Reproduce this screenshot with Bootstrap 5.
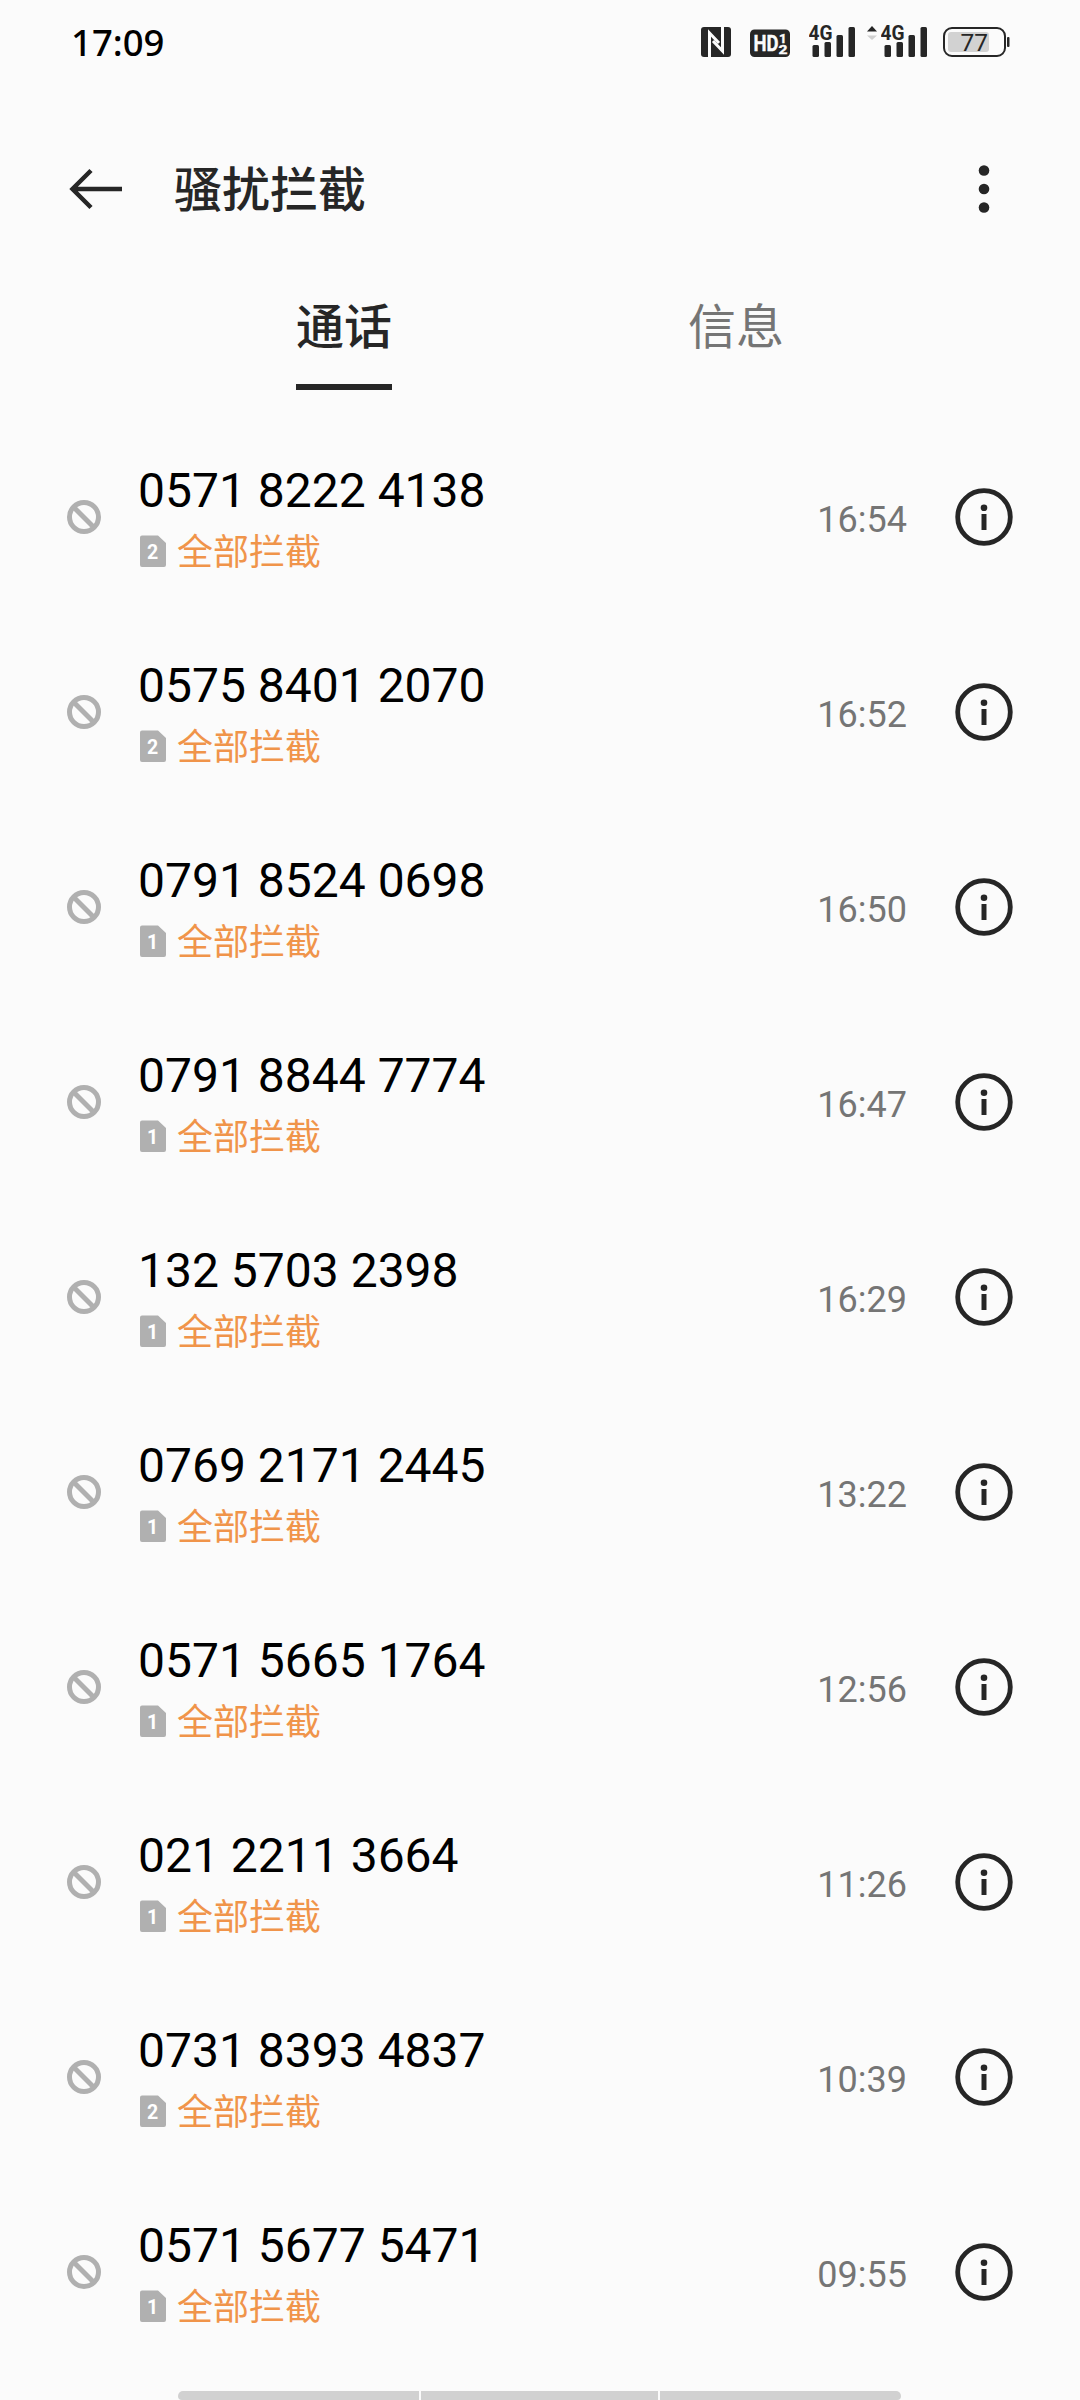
<!DOCTYPE html>
<html lang="zh-CN">
<head>
<meta charset="utf-8">
<meta name="viewport" content="width=device-width, initial-scale=1">
<title>骚扰拦截</title>
<link href="https://cdn.jsdelivr.net/npm/bootstrap@5.3.0/dist/css/bootstrap.min.css" rel="stylesheet">
<style>
  body { background: #fbfbfb; color: #262626; font-family: Roboto, "Noto Sans CJK SC", sans-serif; }
  svg { display: block; flex: none; }
  .screen { width: 1080px; height: 2400px; overflow: hidden; }
  .status { height: 84px; padding: 0 70px 0 71px; }
  .clock { font: 500 36.500px/40px "Noto Sans", sans-serif; color: #000; }
  .appbar { height: 210px; padding: 0 90px 0 69px; }
  .appbar h1 { font-size: 48px; line-height: 60px; font-weight: 500; margin-left: 51px; padding-top: 3px; }
  .tabs { height: 126px; padding-left: 296px; gap: 296px; }
  .tabs .nav-link { padding: 1px 0 0; font-size: 48px; line-height: 66px; color: #757575; border-radius: 0; height: 96px; border-bottom: 6px solid transparent; }
  .tabs .nav-link.active { color: #262626; font-weight: 500; border-color: #262626; }
  .call { height: 195px; padding: 0 67px 2px 67px; }
  .call-body { margin-left: 37px; padding-top: 4px; }
  .phone { font-size: 48px; line-height: 56px; color: #000; }
  .tag { font-size: 36px; line-height: 44px; color: #f0944a; gap: 11px; margin: 8px 0 0 2px; }
  .when { font-size: 36px; line-height: 42px; color: #757575; margin-right: 48px; padding-top: 7px; }
  .handle { margin: auto 179px 0 178px; height: 9px; gap: 2px; }
  .handle span { background: #d1d1d1; width: 241px; }
  .handle span:nth-child(2) { width: 237px; }
  .handle span:first-child { border-radius: 5px 0 0 4px; }
  .handle span:last-child { border-radius: 0 5px 4px 0; }
</style>
<script src="https://cdn.jsdelivr.net/npm/bootstrap@5.3.0/dist/js/bootstrap.bundle.min.js"></script>
</head>
<body>
<svg width="0" height="0" class="position-absolute" aria-hidden="true">
  <symbol id="block" viewBox="0 0 34 34"><g fill="none" stroke="#b0b0b0" stroke-width="5"><circle cx="17" cy="17" r="14.5"/><path d="M7 7.5 27 27.5"/></g></symbol>
  <symbol id="info" viewBox="0 0 58 58"><circle cx="29" cy="29" r="26.3" fill="none" stroke="#262626" stroke-width="4.8"/><circle cx="29" cy="19.8" r="3.3" fill="#262626"/><path d="M26.5 26h5v16h-5z" fill="#262626"/></symbol>
  <symbol id="sim" viewBox="0 0 26 32"><path d="M2 .5h16L26 8v22a2 2 0 0 1-2 2H2a2 2 0 0 1-2-2V2.500a2 2 0 0 1 2-2z" fill="#b0b0b0"/></symbol>
  <symbol id="bars" viewBox="0 0 46 40"><g fill="#262626"><rect x="3.500" y="23" width="6.500" height="12" rx="1.500"/><rect x="15.500" y="20" width="6.500" height="15" rx="1.500"/><rect x="27.500" y="13" width="6.500" height="22" rx="1.500"/><rect x="39.500" y="5" width="6.500" height="30" rx="1.500"/></g></symbol>
</svg>
<div class="screen d-flex flex-column">
  <header class="status d-flex align-items-center">
    <div class="clock">17:09</div>
    <div class="d-flex ms-auto">
      <svg width="30" height="40" viewBox="0 0 30 40"><rect y="5" width="30" height="30" rx="3" fill="#262626"/><path d="M8.500 35V11L18 21" fill="none" stroke="#fbfbfb" stroke-width="3"/><path d="M21.500 5V29L12 19" fill="none" stroke="#fbfbfb" stroke-width="3"/></svg>
      <svg width="40" height="40" viewBox="0 0 40 40" style="margin-left:19px"><rect y="7.500" width="40" height="27.500" rx="4.500" fill="#262626"/><g fill="#fbfbfb" stroke="#fbfbfb" stroke-width=".4" font-family="Roboto" font-weight="700"><text x="3.500" y="28.800" font-size="21.500" textLength="25" lengthAdjust="spacingAndGlyphs">HD</text><text x="29" y="20.500" font-size="13.500">1</text><text x="28.500" y="32" font-size="13.500" textLength="9" lengthAdjust="spacingAndGlyphs">2</text></g></svg>
      <svg width="46" height="40" viewBox="0 0 46 40" style="margin-left:19px"><use href="#bars"/><text x="-.5" y="18" font-family="Roboto" font-weight="700" font-size="21" fill="#262626" stroke="#fbfbfb" stroke-width="1.500" paint-order="stroke" textLength="24" lengthAdjust="spacingAndGlyphs">4G</text></svg>
      <svg width="10" height="40" viewBox="0 0 10 40" style="margin-left:12px"><path d="M0 9.500 5 4l5 5.500z" fill="#262626"/><path d="M0 13.500h10L5 18z" fill="#d0d0d0"/></svg>
      <svg width="46" height="40" viewBox="0 0 46 40" style="margin-left:4px"><use href="#bars"/><text x="-.5" y="18" font-family="Roboto" font-weight="700" font-size="21" fill="#262626" stroke="#fbfbfb" stroke-width="1.500" paint-order="stroke" textLength="24" lengthAdjust="spacingAndGlyphs">4G</text></svg>
      <svg width="67" height="40" viewBox="0 0 67 40" style="margin-left:16px"><rect x="1" y="6" width="61" height="28" rx="8" fill="none" stroke="#262626" stroke-width="2"/><rect x="5" y="10" width="41" height="20" rx="3" fill="#d2d2d2"/><rect x="64" y="15" width="2.500" height="10" rx="1" fill="#262626"/><text x="17.500" y="29" font-family="Roboto" font-size="24.500" fill="#262626">77</text></svg>
    </div>
  </header>

  <div class="appbar d-flex align-items-center">
    <svg width="54" height="42" viewBox="0 0 54 42"><path d="M22 2.500 3.500 21 22 39.500M3.500 21H53" fill="none" stroke="#262626" stroke-width="4.500"/></svg>
    <h1 class="mb-0">骚扰拦截</h1>
    <svg class="ms-auto" width="12" height="50" viewBox="0 0 12 50" fill="#262626"><circle cx="6" cy="6.500" r="5.300"/><circle cx="6" cy="25" r="5.300"/><circle cx="6" cy="43.500" r="5.300"/></svg>
  </div>

  <nav class="tabs nav d-flex">
    <a class="nav-link active" href="#">通话</a>
    <a class="nav-link" href="#">信息</a>
  </nav>

  <main id="calls"></main>

  <div class="handle d-flex"><span></span><span></span><span></span></div>
</div>
<script>
  const calls = [
    ["0571 8222 4138", 2, "16:54"],
    ["0575 8401 2070", 2, "16:52"],
    ["0791 8524 0698", 1, "16:50"],
    ["0791 8844 7774", 1, "16:47"],
    ["132 5703 2398", 1, "16:29"],
    ["0769 2171 2445", 1, "13:22"],
    ["0571 5665 1764", 1, "12:56"],
    ["021 2211 3664", 1, "11:26"],
    ["0731 8393 4837", 2, "10:39"],
    ["0571 5677 5471", 1, "09:55"]
  ];
  document.getElementById("calls").innerHTML = calls.map(([phone, sim, time]) => `
    <div class="call d-flex align-items-center">
      <svg width="34" height="34"><use href="#block"/></svg>
      <div class="call-body flex-grow-1">
        <div class="phone">${phone}</div>
        <div class="tag d-flex align-items-center">
          <svg width="26" height="32"><use href="#sim"/><text x="12.500" y="23.500" text-anchor="middle" font-family="Roboto" font-weight="700" font-size="19.500" fill="#fff">${sim}</text></svg>
          <span class="pt-1">全部拦截</span>
        </div>
      </div>
      <div class="when">${time}</div>
      <svg width="58" height="58"><use href="#info"/></svg>
    </div>`).join("");
</script>
</body>
</html>
